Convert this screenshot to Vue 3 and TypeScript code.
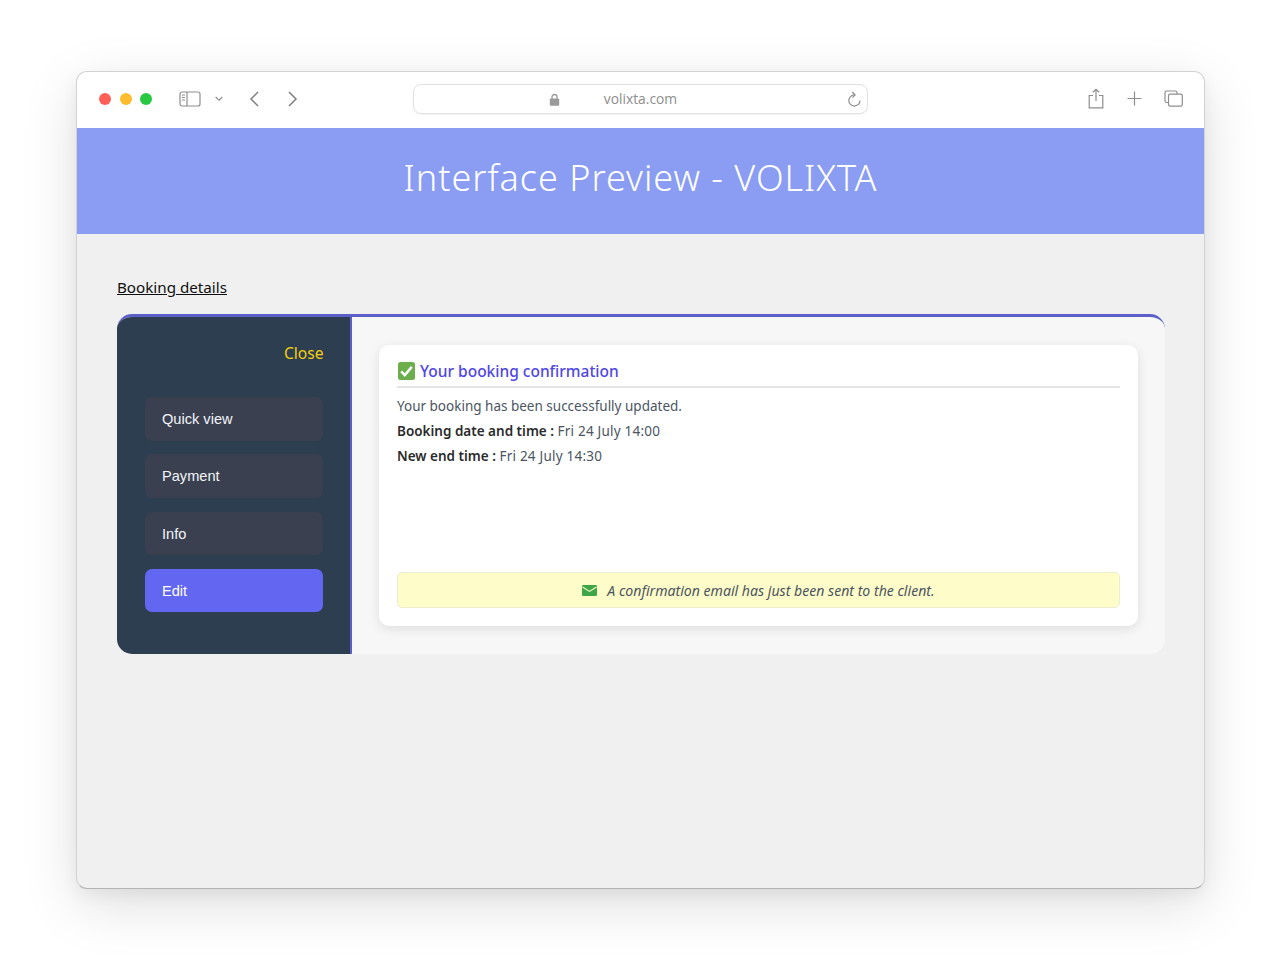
<script setup lang="ts">
const menu: { label: string; active?: boolean }[] = [
  { label: 'Quick view' },
  { label: 'Payment' },
  { label: 'Info' },
  { label: 'Edit', active: true },
]
</script>

<template>
  <div class="stage">
    <div class="window">
      <div class="toolbar">
        <div class="lights">
          <span class="light red"></span>
          <span class="light yellow"></span>
          <span class="light green"></span>
        </div>
        <svg class="ic sidebar-ic" width="22" height="16" viewBox="0 0 22 16" fill="none" stroke="#8e8e8e" stroke-width="1.2">
          <rect x="1" y="1" width="20" height="14" rx="2" />
          <path d="M8 1v14" />
          <path d="M3 4h3M3 6.5h3M3 9h3" stroke-width="1" />
        </svg>
        <svg class="ic chev" width="8" height="6" viewBox="0 0 8 6" fill="none" stroke="#8e8e8e" stroke-width="1.1">
          <path d="M0.7 1l3.3 3.2L7.3 1" />
        </svg>
        <svg class="ic back" width="10" height="16" viewBox="0 0 10 16" fill="none" stroke="#808080" stroke-width="1.5">
          <path d="M9 1L2 8l7 7" />
        </svg>
        <svg class="ic forward" width="10" height="16" viewBox="0 0 10 16" fill="none" stroke="#808080" stroke-width="1.5">
          <path d="M1 1l7 7-7 7" />
        </svg>
        <div class="address">
          <svg class="lock" width="11" height="13" viewBox="0 0 11 13" fill="none">
            <path d="M3 6V4a2.5 2.5 0 0 1 5 0v2" stroke="#9a9a9a" stroke-width="1.3" />
            <rect x="0.8" y="5.5" width="9.4" height="7.2" rx="1" fill="#9a9a9a" />
          </svg>
          <span class="url">volixta.com</span>
          <svg class="reload" width="15" height="16" viewBox="0 0 15 16" fill="none" stroke="#8a8a8a" stroke-width="1.15">
            <path d="M13 9.5A5.6 5.6 0 1 1 7.4 3.9" />
            <path d="M5.4 1l2.7 2.9-2.7 2.7" />
          </svg>
        </div>
        <svg class="ic share" width="16" height="21" viewBox="0 0 16 21" fill="none" stroke="#8e8e8e" stroke-width="1.2">
          <path d="M5 7.5H1.2v12.3h13.6V7.5H11" />
          <path d="M8 13V1.2M4.8 4.2L8 1.2l3.2 3" />
        </svg>
        <svg class="ic plus" width="15" height="15" viewBox="0 0 15 15" fill="none" stroke="#8e8e8e" stroke-width="1.2">
          <path d="M7.5 0.5v14M0.5 7.5h14" />
        </svg>
        <svg class="ic tabs" width="19" height="17" viewBox="0 0 19 17" fill="none" stroke="#8e8e8e" stroke-width="1.2">
          <path d="M4 12.5H2.5A1.6 1.6 0 0 1 1 11V2.6A1.6 1.6 0 0 1 2.5 1h8.8A1.6 1.6 0 0 1 13 2.6V4" />
          <rect x="4.5" y="4.2" width="13.8" height="12" rx="1.6" />
        </svg>
      </div>

      <header class="banner">Interface Preview - VOLIXTA</header>

      <main class="page">
        <a class="crumb">Booking details</a>
        <section class="panel">
          <aside class="side">
            <div class="close">Close</div>
            <nav class="menu">
              <div v-for="item in menu" :key="item.label" class="menu-item" :class="{ active: item.active }">
                {{ item.label }}
              </div>
            </nav>
          </aside>
          <div class="content">
            <div class="card">
              <h2 class="title">
                <svg width="17" height="18" viewBox="0 0 17 18">
                  <rect width="17" height="18" rx="2.5" fill="#6cae4b" />
                  <path d="M3.2 9.3l3.6 3.8 7-8.2" fill="none" stroke="#fff" stroke-width="2.5" />
                </svg>
                <span>Your booking confirmation</span>
              </h2>
              <div class="lines">
                <p>Your booking has been successfully updated.</p>
                <p><strong>Booking date and time :</strong> <span class="val">Fri 24 July 14:00</span></p>
                <p><strong>New end time :</strong> <span class="val">Fri 24 July 14:30</span></p>
              </div>
              <div class="notice">
                <svg width="15" height="11" viewBox="0 0 15 11">
                  <rect width="15" height="11" rx="1.2" fill="#3fa648" />
                  <path d="M0.5 2l7 4.4 7-4.4" fill="none" stroke="#fdfcc8" stroke-width="1.1" />
                </svg>
                <em>A confirmation email has just been sent to the client.</em>
              </div>
            </div>
          </div>
        </section>
      </main>
    </div>
  </div>
</template>

<style>
html, body { margin: 0; background: #fff; }
</style>

<style scoped>
.stage {
  height: 959px;
  box-sizing: border-box;
  padding: 71px 75px 0 76px;
  background: #fff;
  overflow: hidden;
  font-family: "Noto Sans", "Open Sans", sans-serif;
}
.window {
  height: 818px;
  box-sizing: border-box;
  border: 1px solid #d2d2d2;
  border-bottom-color: #b4b4b4;
  border-radius: 11px;
  background: #f0f0f0;
  overflow: hidden;
  box-shadow: 0 16px 55px rgba(0, 0, 0, 0.13), 0 6px 16px rgba(0, 0, 0, 0.05);
}
.toolbar {
  height: 56px;
  box-sizing: border-box;
  padding: 0 0 3px 22px;
  background: #fff;
  display: flex;
  align-items: center;
}
.lights { display: flex; gap: 8.7px; }
.light { width: 12px; height: 12px; border-radius: 50%; }
.red { background: #ff5f57; }
.yellow { background: #febc2e; }
.green { background: #28c840; }
.ic { flex: none; }
.sidebar-ic { margin-left: 26.6px; }
.chev { margin-left: 14px; }
.back { margin-left: 26px; }
.forward { margin-left: 29px; }
.address {
  width: 453px;
  height: 28px;
  margin-left: 115px;
  border: 1px solid #e0e0e0;
  border-radius: 8px;
  display: flex;
  align-items: center;
  justify-content: center;
  position: relative;
  box-shadow: 0 1px 1px rgba(0, 0, 0, 0.04);
}
.lock { position: absolute; left: 135px; top: 8px; }
.url { font-family: "Open Sans", sans-serif; font-size: 13.8px; color: #8d8d8d; }
.reload { position: absolute; right: 5px; top: 6px; }
.share { margin-left: 220px; }
.plus { margin-left: 23px; }
.tabs { margin-left: 22px; }
.banner {
  height: 106px;
  background: #8a9df3;
  color: #fff;
  font-size: 36px;
  font-weight: 300;
  line-height: 100px;
  text-align: center;
  letter-spacing: 1px;
}
.page { padding: 42px 39px 0 40px; }
.crumb {
  display: block;
  width: fit-content;
  font-size: 15.2px;
  line-height: 23px;
  color: #111;
  text-decoration: underline;
}
.panel {
  margin-top: 15px;
  height: 340px;
  box-sizing: border-box;
  display: flex;
  background: #f7f7f7;
  border-top: 3px solid #5d5fc9;
  border-radius: 15px;
  overflow: hidden;
}
.side {
  width: 235px;
  box-sizing: border-box;
  background: #2c3e50;
  border-right: 2px solid #5d5fc9;
  padding: 24px 27.5px 0 27.5px;
}
.close {
  margin-right: -1px;
  text-align: right;
  color: #f5cf0f;
  font-size: 15.6px;
  line-height: 24px;
}
.menu {
  margin-top: 32px;
  display: flex;
  flex-direction: column;
  gap: 13.8px;
}
.menu-item {
  height: 43.5px;
  box-sizing: border-box;
  padding-left: 17.5px;
  border-radius: 7px;
  background: #3a4050;
  color: #f2f5fa;
  font-family: "Liberation Sans", Arial, sans-serif;
  font-size: 14.6px;
  line-height: 44.5px;
}
.menu-item.active { background: #6366f1; color: #fff; }
.content { flex: 1; padding: 28px 27px 0 27px; }
.card {
  height: 281px;
  box-sizing: border-box;
  background: #fff;
  border-radius: 10px;
  padding: 14px 18px 18px 18px;
  display: flex;
  flex-direction: column;
  box-shadow: 0 3px 12px rgba(0, 0, 0, 0.1);
}
.title {
  margin: 0;
  padding-bottom: 3px;
  display: flex;
  align-items: center;
  gap: 5px;
  font-size: 15.5px;
  line-height: 24px;
  font-weight: 500;
  color: #4f46e5;
  border-bottom: 2px solid #e5e5e5;
}
.title svg { margin-left: 1px; }
.lines { margin-top: 6px; flex: 1; font-size: 13.5px; color: #4b5563; }
.lines p { margin: 0; line-height: 25px; }
.lines strong { color: #2b2b2b; font-weight: 600; }
.val { letter-spacing: 0.22px; }
.notice {
  height: 36px;
  box-sizing: border-box;
  background: #fefcc8;
  border: 1px solid #ececcf;
  border-radius: 5px;
  display: flex;
  align-items: center;
  justify-content: center;
  gap: 10px;
  font-size: 14.1px;
  color: #4b5563;
}
</style>
